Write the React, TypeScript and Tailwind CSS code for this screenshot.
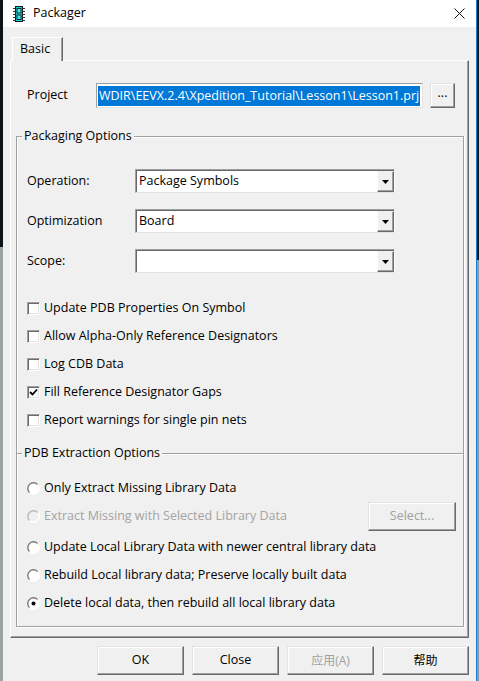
import React from "react";

const FONT = "font-['Open_Sans','Noto_Sans_CJK_SC',sans-serif]";

function ChipIcon() {
  return (
    <svg width="12" height="16" viewBox="0 0 12 16">
      <rect x="2.5" y="0.5" width="7" height="15" fill="#15d2dc" stroke="#1a1a1a" />
      <rect x="4" y="2.5" width="4" height="4.5" fill="#33eef5" stroke="#1a1a1a" strokeWidth="0.9" />
      <rect x="4" y="9" width="4" height="4.5" fill="#33eef5" stroke="#1a1a1a" strokeWidth="0.9" />
      {[2, 5, 8, 11, 14].map((y) => (
        <g key={y}>
          <line x1="0" y1={y + 0.5} x2="2.5" y2={y + 0.5} stroke="#333" />
          <line x1="9.5" y1={y + 0.5} x2="12" y2={y + 0.5} stroke="#333" />
        </g>
      ))}
    </svg>
  );
}

function CloseIcon() {
  return (
    <svg width="11" height="11" viewBox="0 0 11 11">
      <path d="M0.5 0.5 L10.5 10.5 M10.5 0.5 L0.5 10.5" stroke="#111" strokeWidth="1" />
    </svg>
  );
}

function Arrow() {
  return (
    <svg width="7" height="4" viewBox="0 0 7 4">
      <path d="M0 0 H7 L3.5 4 Z" fill="#000" />
    </svg>
  );
}

function Combo({ value }: { value: string }) {
  return (
    <div className="flex h-[24px] w-[260px] border border-t-[#a0a0a0] border-l-[#a0a0a0] border-r-white border-b-[#e3e3e3] shadow-[inset_1px_1px_0_#696969]">
      <div className="flex-1 bg-white ml-px mt-px flex items-center pl-[2px] text-[12.5px] text-black">
        {value}
      </div>
      <div className="w-[17px] mt-px flex items-center justify-center bg-[#f0f0f0] border border-t-[#f0f0f0] border-l-white border-r-[#696969] border-b-[#696969] shadow-[inset_-1px_-1px_0_#a0a0a0]">
        <Arrow />
      </div>
    </div>
  );
}

function Checkbox({ checked, label }: { checked?: boolean; label: string }) {
  return (
    <div className="h-[28px] flex items-center">
      <div className="w-[13px] h-[13px] bg-white border border-t-[#a0a0a0] border-l-[#a0a0a0] border-r-white border-b-white shadow-[inset_1px_1px_0_#696969,inset_-1px_-1px_0_#e3e3e3] flex items-center justify-center">
        {checked && (
          <svg width="9" height="9" viewBox="0 0 9 9">
            <path d="M1 4 L3.5 6.5 L8 1.5" stroke="#000" strokeWidth="1.8" fill="none" />
          </svg>
        )}
      </div>
      <span className="ml-[4px] text-[12.5px] text-black">{label}</span>
    </div>
  );
}

function Radio({ selected, disabled, label }: { selected?: boolean; disabled?: boolean; label: string }) {
  return (
    <div className="flex items-center">
      <svg width="13" height="13" viewBox="0 0 13 13">
        <defs>
          <linearGradient id="rg" x1="0" y1="0" x2="1" y2="1">
            <stop offset="0.45" stopColor="#7a7a7a" />
            <stop offset="0.55" stopColor="#ffffff" />
          </linearGradient>
          <linearGradient id="rgd" x1="0" y1="0" x2="1" y2="1">
            <stop offset="0.45" stopColor="#b8b8b8" />
            <stop offset="0.55" stopColor="#ffffff" />
          </linearGradient>
        </defs>
        <circle cx="6.5" cy="6.5" r="5.7" fill={disabled ? "#f0f0f0" : "#fff"} stroke={disabled ? "url(#rgd)" : "url(#rg)"} strokeWidth="1.4" />
        {selected && <circle cx="6.5" cy="6.5" r="2" fill="#000" />}
      </svg>
      <span className={`ml-[4px] text-[12.5px] ${disabled ? "text-[#a3a3a3]" : "text-black"}`}>{label}</span>
    </div>
  );
}

function Btn({ children, disabled, className }: { children: React.ReactNode; disabled?: boolean; className: string }) {
  return (
    <div
      className={`flex items-center justify-center bg-[#f0f0f0] border border-t-[#e3e3e3] border-l-[#e3e3e3] border-r-[#696969] border-b-[#696969] shadow-[inset_-1px_-1px_0_#a0a0a0,inset_1px_1px_0_#fff] text-[12.5px] ${
        disabled ? "text-[#a0a0a0]" : "text-black"
      } ${className}`}
    >
      {children}
    </div>
  );
}

export default function App() {
  return (
    <div className={`flex w-[479px] h-[681px] bg-[#1b1b1b] ${FONT}`}>
      {/* desktop edge on the left */}
      <div className="w-[3px] flex flex-col">
        <div className="h-[247px] bg-[#0d1418]" />
        <div className="flex-1 bg-[#9ea3a6]" />
      </div>

      {/* dialog */}
      <div className="w-[473px] flex flex-col">
        <div className="h-[27px] bg-white flex items-center pl-[10px] pr-[11px]">
          <ChipIcon />
          <span className="ml-[8px] text-[12.5px] text-black">Packager</span>
          <div className="ml-auto flex">
            <CloseIcon />
          </div>
        </div>

        <div className="flex-1 bg-[#f0f0f0] flex flex-col pt-[10px]">
          {/* tab */}
          <div className="relative z-10 ml-[9px] -mb-px w-[51px] h-[24px] bg-[#f0f0f0] border-t border-l border-r border-t-white border-l-white border-r-[#696969] shadow-[inset_-1px_0_0_#a0a0a0] flex items-center pl-[7px] text-[12.5px] text-black">
            Basic
          </div>

          {/* tab panel */}
          <div className="ml-[7px] w-[459px] h-[578px] border border-t-white border-l-white border-r-[#696969] border-b-[#696969] shadow-[inset_-1px_-1px_0_#a0a0a0] flex flex-col pt-[22px]">
            <div className="flex items-center h-[25px] pl-[16px]">
              <span className="w-[69px] text-[12.5px] text-black">Project</span>
              <div className="w-[327px] h-[25px] border border-t-[#a0a0a0] border-l-[#a0a0a0] border-r-[#e3e3e3] border-b-[#e3e3e3] bg-white flex items-center pl-px overflow-hidden">
                <span className="bg-[#0078d7] text-white text-[12.5px] h-[20px] leading-[20px] px-px w-[322px] whitespace-nowrap overflow-hidden">
                  WDIR\EEVX.2.4\Xpedition_Tutorial\Lesson1\Lesson1.prj
                </span>
              </div>
              <Btn className="ml-[7px] w-[25px] h-[25px]">
                <span className="-mt-[4px]">...</span>
              </Btn>
            </div>

            {/* Packaging Options */}
            <div className="mt-[28px] ml-[5px] w-[448px] h-[317px] border-t border-l border-r border-[#a0a0a0] shadow-[inset_1px_1px_0_#fff,1px_0_0_#fff] flex flex-col">
              <div className="-mt-[10px] ml-[5px] px-[2px] w-fit bg-[#f0f0f0] leading-[18px] text-[12.5px] text-black">
                Packaging Options
              </div>
              <div className="mt-[24px] pl-[10px] flex flex-col gap-[16px]">
                <div className="flex items-center h-[24px]">
                  <span className="w-[108px] text-[12.5px] text-black">Operation:</span>
                  <Combo value="Package Symbols" />
                </div>
                <div className="flex items-center h-[24px]">
                  <span className="w-[108px] text-[12.5px] text-black">Optimization</span>
                  <Combo value="Board" />
                </div>
                <div className="flex items-center h-[24px]">
                  <span className="w-[108px] text-[12.5px] text-black">Scope:</span>
                  <Combo value="" />
                </div>
              </div>
              <div className="mt-[21px] pl-[10px] flex flex-col">
                <Checkbox label="Update PDB Properties On Symbol" />
                <Checkbox label="Allow Alpha-Only Reference Designators" />
                <Checkbox label="Log CDB Data" />
                <Checkbox checked label="Fill Reference Designator Gaps" />
                <Checkbox label="Report warnings for single pin nets" />
              </div>
            </div>

            {/* PDB Extraction Options */}
            <div className="ml-[5px] w-[448px] h-[174px] border border-[#a0a0a0] shadow-[inset_1px_1px_0_#fff,1px_1px_0_#fff] flex flex-col">
              <div className="-mt-[10px] ml-[5px] px-[2px] w-fit bg-[#f0f0f0] leading-[18px] text-[12.5px] text-black">
                PDB Extraction Options
              </div>
              <div className="mt-[12px] pl-[10px] pr-[7px] flex flex-col">
                <div className="h-[28px] flex items-center">
                  <Radio label="Only Extract Missing Library Data" />
                </div>
                <div className="h-[29px] flex items-center justify-between">
                  <Radio disabled label="Extract Missing with Selected Library Data" />
                  <Btn disabled className="w-[88px] h-[29px]">
                    Select...
                  </Btn>
                </div>
                <div className="mt-[2px] h-[28px] flex items-center">
                  <Radio label="Update Local Library Data with newer central library data" />
                </div>
                <div className="h-[28px] flex items-center">
                  <Radio label="Rebuild Local library data; Preserve locally built data" />
                </div>
                <div className="h-[28px] flex items-center">
                  <Radio selected label="Delete local data, then rebuild all local library data" />
                </div>
              </div>
            </div>
          </div>

          {/* dialog buttons */}
          <div className="mt-[8px] flex justify-end gap-[8px] pr-[7px]">
            <Btn className="w-[87px] h-[29px]">OK</Btn>
            <Btn className="w-[87px] h-[29px]">Close</Btn>
            <Btn disabled className="w-[87px] h-[29px] !text-[12px]">
              应用(A)
            </Btn>
            <Btn className="w-[87px] h-[29px] !text-[12px]">帮助</Btn>
          </div>
        </div>
      </div>

      {/* desktop edge on the right */}
      <div className="w-px bg-[#1a7fd4]" />
      <div className="w-[2px] flex flex-col">
        <div className="h-[260px] bg-[#161616]" />
        <div className="flex-1 bg-[#8e9aa6]" />
      </div>
    </div>
  );
}
